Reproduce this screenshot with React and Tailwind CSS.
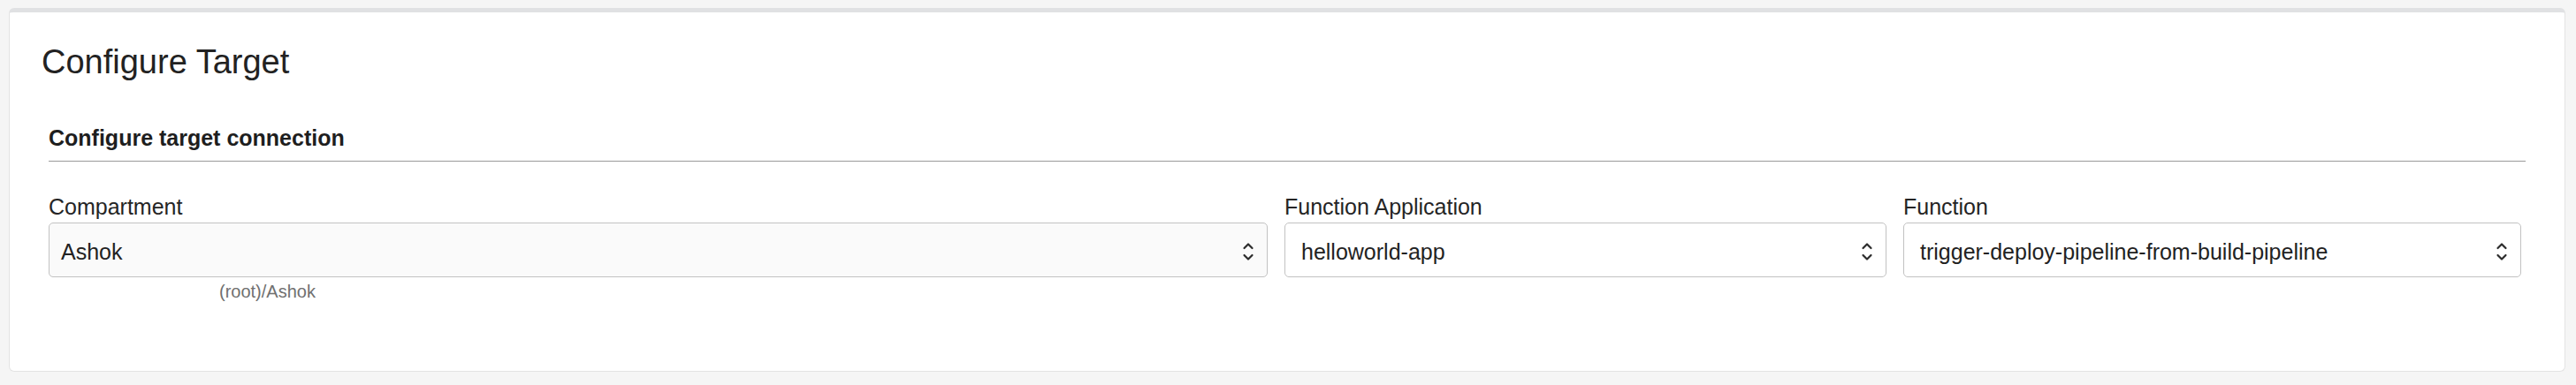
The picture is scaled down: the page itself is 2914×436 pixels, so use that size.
import React from 'react';

const Chevrons = () => (
  <svg width="14" height="26" viewBox="0 0 14 26" fill="none" stroke="#2b2b2b" strokeWidth="2.2" strokeLinecap="round" strokeLinejoin="round">
    <path d="M2.5 9 L7 4.5 L11.5 9" />
    <path d="M2.5 17 L7 21.5 L11.5 17" />
  </svg>
);

const SelectField = ({ label, value, muted, padLeft, hint }) => (
  <div className="flex flex-col">
    <label className="text-[25px] leading-[30px] text-[#252525]">{label}</label>
    <div
      className={`mt-[3px] h-[62px] flex items-center justify-between border border-[#c2c2c2] rounded-[5px] pr-[14px] pt-[3px] ${
        muted ? 'bg-[#fafafa]' : 'bg-white'
      } ${padLeft}`}
    >
      <span className="text-[25px] leading-[30px] text-[#222]">{value}</span>
      <Chevrons />
    </div>
    {hint && (
      <span className="ml-[193px] mt-[4px] text-[20px] leading-[24px] text-[#707070]">{hint}</span>
    )}
  </div>
);

export default function App() {
  return (
    <div
      className="w-[2914px] h-[436px] bg-[#f5f5f5] pt-[9px] pl-[10px] pr-[12px]"
      style={{ fontFamily: '"Liberation Sans", Arial, sans-serif' }}
    >
      <div className="h-[412px] bg-white border border-[#e3e3e3] border-t-[5px] border-t-[#e0e1e3] rounded-[6px] px-[36px] pt-[34px]">
        <h1 className="text-[38px] leading-[44px] text-[#222] font-normal">Configure Target</h1>

        <section className="mx-[8px] mt-[50px]">
          <h2 className="text-[25px] leading-[28px] font-bold text-[#1e1e1e] pb-[12px] border-b border-[#9a9a9a]">
            Configure target connection
          </h2>

          <div className="mt-[36px] grid grid-cols-[1379px_681px_699px] gap-x-[19px] items-start">
            <SelectField label="Compartment" value="Ashok" muted padLeft="pl-[13px]" hint="(root)/Ashok" />
            <SelectField label="Function Application" value="helloworld-app" padLeft="pl-[18px]" />
            <SelectField label="Function" value="trigger-deploy-pipeline-from-build-pipeline" padLeft="pl-[18px]" />
          </div>
        </section>
      </div>
    </div>
  );
}
